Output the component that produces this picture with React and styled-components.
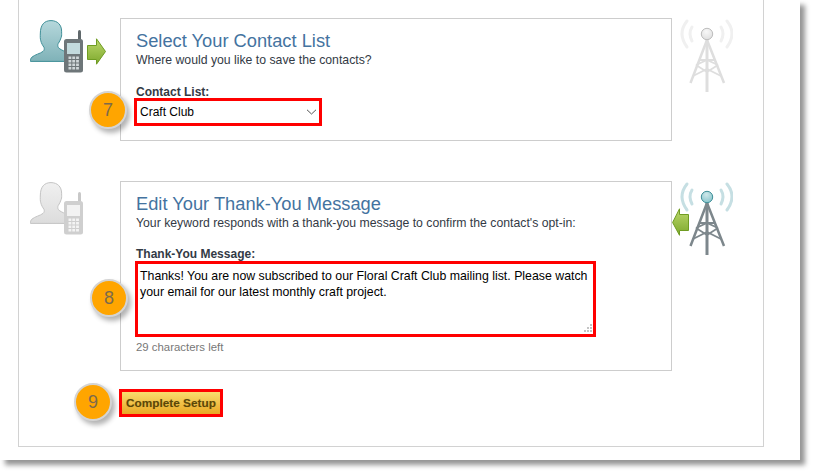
import React from "react";
import styled, { createGlobalStyle } from "styled-components";

const Global = createGlobalStyle`
  html, body { margin: 0; padding: 0; background: #fff; }
  body { font-family: "Liberation Sans", Arial, sans-serif; overflow: hidden; min-height: 475px; }
`;
const Shot = styled.div`
  width: 800px; height: 460px; background: #fff; overflow: hidden;
  box-shadow: 5px 5px 5px rgba(0,0,0,.42);
`;
const Panel = styled.main`
  margin-left: 18px; width: 746px; height: 447px; box-sizing: border-box;
  border: 1px solid #d2d2d2; border-top: none; padding-top: 18px;
`;
const Section = styled.section`
  display: flex; align-items: flex-start; margin-bottom: ${p => p.$gap}px;
`;
const IconCol = styled.div`
  width: 101px; flex: none; box-sizing: border-box; padding: ${p => p.$top}px 0 0 11px; display: flex;
`;
const Box = styled.div`
  position: relative; width: 552px; height: ${p => p.$h}px; box-sizing: border-box;
  border: 1px solid #cdcdcd; padding: ${p => p.$pad}px 15px 0; flex: none;
`;
const Title = styled.h2`
  margin: 0; font-size: 18.3px; line-height: 20px; font-weight: 400; color: #44739f;
`;
const Sub = styled.p`
  margin: 1px 0 0; font-size: 12.25px; line-height: 16px; color: #333a45;
`;
const Label = styled.label`
  display: block; font-size: 12px; line-height: 14px; font-weight: 700; color: #333a45;
  margin-top: ${p => p.$mt}px;
`;
const SelectWrap = styled.div`
  position: relative; width: 188px; height: 28px; margin: ${p => p.$mt}px 0 0 -2px;
`;
const Select = styled.select`
  appearance: none; width: 100%; height: 100%; box-sizing: border-box; border: 3px solid #f00;
  border-radius: 0; background: #fff; font: 12px "Liberation Sans", Arial, sans-serif; color: #000;
  padding: 0 0 0 3px; outline: none;
`;
const Chevron = styled.svg`
  position: absolute; right: 5px; top: 11px; width: 11px; height: 6px; pointer-events: none;
`;
const TextArea = styled.textarea`
  display: block; width: 461px; height: 76px; box-sizing: border-box; margin: 0 0 0 -1px;
  border: 3px solid #f00; border-radius: 0; padding: 4px 2px 3px; outline: none; resize: none;
  font: 12.33px/16px "Liberation Sans", Arial, sans-serif; color: #000; background: #fff; overflow: hidden;
`;
const AreaWrap = styled.div`
  position: relative; width: 461px;
`;
const Grip = styled.svg`
  position: absolute; right: 5px; bottom: 5px; width: 8px; height: 8px;
`;
const Hint = styled.div`
  font-size: 11.4px; line-height: 13px; color: #777; margin-top: 4px;
`;
const TowerCol = styled.div`
  flex: none; display: flex; padding-top: ${p => p.$top}px;
`;
const Badge = styled.div`
  position: absolute; left: ${p => p.$x}px; top: ${p => p.$y}px; width: 38px; height: 38px; box-sizing: border-box;
  border-radius: 50%; background: #ffa500; border: 2px solid #d4d4d4;
  box-shadow: 3px 4px 5px rgba(0,0,0,.3); color: #7c6a4c; font-size: 18px;
  display: flex; align-items: center; justify-content: center; z-index: 2;
`;
const Actions = styled.div`
  position: relative; margin-left: 100px; width: 104px; height: 28px;
`;
const Button = styled.button`
  width: 100%; height: 100%; box-sizing: border-box; border: 3px solid #f00; border-radius: 0; padding: 0;
  background: linear-gradient(#f9dc6e, #e9a824); color: #5b4708;
  font: 700 11.8px "Liberation Sans", Arial, sans-serif;
  text-shadow: 0 0 1px rgba(90,70,0,.25);
`;

const Person = ({ gray }) => {
  const id = gray ? "pg" : "pc";
  const c = gray
    ? { a: "#f0f0f0", b: "#dcdcdc", line: "#c4c4c4", ph: "#cfcfcf", sc: "#f2f2f2", key: "#f4f4f4", ant: "#c8c8c8" }
    : { a: "#b6d8dc", b: "#7fb2b8", line: "#3f8f98", ph: "#6e7679", sc: "#c3dadd", key: "#cfd6d8", ant: "#60686b" };
  return (
    <svg width="54" height="53" viewBox="0 0 54 53">
      <defs>
        <linearGradient id={id} x1="0" y1="0" x2="0" y2="1">
          <stop offset="0" stopColor={c.a} />
          <stop offset="1" stopColor={c.b} />
        </linearGradient>
      </defs>
      <path
        d="M21 .6c6.500 0 10.600 4.300 10.600 10.600 0 3 .3 4.300-.4 6.200-.8 2.400-1.800 4.600-3 6.200-.6 1-.5 3 .2 4 1.600 1.800 4.600 3 7 4v9.800H.5c0-1.600 0-3 1.500-4.300 2.800-2.500 8.400-3.500 11-5.700 1.300-1 1.500-2.700 1-4-1.300-2-2.700-4.200-3.200-6.600-.7-2-.5-4.400-.5-6.800C10.300 4.500 14.500.6 21 .6z"
        fill={`url(#${id})`} stroke={c.line} strokeWidth="1"
      />
      <rect x="48" y="10" width="3" height="11" rx="1.500" fill={c.ant} />
      <rect x="34" y="19" width="19" height="33.500" rx="2.500" fill={c.ph} />
      <rect x="37" y="23" width="13" height="11" fill={c.sc} />
      <g fill={c.key}>
        {[0, 1, 2, 3].flatMap(r =>
          [0, 1, 2].map(k => <rect key={`${r}${k}`} x={38.5 + k * 3.8} y={36.5 + r * 3.5} width="2.8" height="2.5" />)
        )}
      </g>
    </svg>
  );
};

const ArrowRight = () => (
  <svg width="19" height="27" viewBox="0 0 19 27" style={{ marginLeft: 3, marginTop: 18 }}>
    <defs>
      <linearGradient id="ar" x1="0" y1="0" x2="0" y2="1">
        <stop offset="0" stopColor="#bcd86c" />
        <stop offset="1" stopColor="#7da82c" />
      </linearGradient>
    </defs>
    <path d="M.5 7.500H9.500V.8L18.500 13.500L9.500 26.200V21.500H.5z" fill="url(#ar)" stroke="#6f9c22" />
  </svg>
);

const Tower = ({ active }) => {
  const c = active
    ? { arc: "#c6dfe3", leg: "#7d878c", ball: "#7fc0c8", ballLine: "#3f8f98", hi: "#cfe8ea" }
    : { arc: "#f0f0f0", leg: "#dedede", ball: "#dcdcdc", ballLine: "#bdbdbd", hi: "#f8f8f8" };
  const id = active ? "ta" : "ti";
  return (
    <svg width="61" height="76" viewBox="0 0 61 76">
      <defs>
        <radialGradient id={id} cx=".45" cy=".3" r=".8">
          <stop offset="0" stopColor={c.hi} />
          <stop offset="1" stopColor={c.ball} />
        </radialGradient>
        <linearGradient id="al" x1="0" y1="0" x2="0" y2="1">
          <stop offset="0" stopColor="#bcd86c" />
          <stop offset="1" stopColor="#7da82c" />
        </linearGradient>
      </defs>
      <g fill="none" stroke={c.arc} strokeLinecap="round">
        <path d="M15 3C8.500 11 8.500 20 15 29" strokeWidth="3" />
        <path d="M20 9C17.500 13 17.500 18 20 23" strokeWidth="3" />
        <path d="M55 3C61.500 11 61.500 20 55 29" strokeWidth="3" />
        <path d="M49 9C51.500 13 51.500 18 49 23" strokeWidth="3" />
      </g>
      <g fill="none" stroke={c.leg}>
        <path d="M35 22L18.500 65M35 22L52 65" strokeWidth="2.500" />
        <path d="M35 22V74" strokeWidth="3" />
        <path d="M27 42L43 42M24 47L35 54L46 47M24 47L35 42L46 47M21 58L35 51L49 58" strokeWidth="1.800" />
      </g>
      <circle cx="35" cy="16" r="5.700" fill={`url(#${id})`} stroke={c.ballLine} strokeWidth="1" />
      {active && (
        <path d="M16.500 33.500H7.500V27.800L.6 41.500L7.500 54.300V49.500H16.500z" fill="url(#al)" stroke="#6f9c22" />
      )}
    </svg>
  );
};

export default function App() {
  return (
    <>
      <Global />
      <Shot>
        <Panel>
          <Section $gap={40}>
            <IconCol $top={2}>
              <Person />
              <ArrowRight />
            </IconCol>
            <Box $h={123} $pad={12}>
              <Title>Select Your Contact List</Title>
              <Sub>Where would you like to save the contacts?</Sub>
              <Label htmlFor="list" $mt={17}>Contact List:</Label>
              <SelectWrap $mt={-1}>
                <Select id="list" defaultValue="Craft Club">
                  <option>Craft Club</option>
                </Select>
                <Chevron viewBox="0 0 11 6">
                  <path d="M1 .8L5.500 5L10 .8" fill="none" stroke="#555" strokeWidth="1" />
                </Chevron>
              </SelectWrap>
              <Badge $x={-32} $y={72}>7</Badge>
            </Box>
            <TowerCol $top={0}><Tower /></TowerCol>
          </Section>
          <Section $gap={18}>
            <IconCol $top={1}>
              <Person gray />
            </IconCol>
            <Box $h={190} $pad={12}>
              <Title>Edit Your Thank-You Message</Title>
              <Sub>Your keyword responds with a thank-you message to confirm the contact's opt-in:</Sub>
              <Label htmlFor="msg" $mt={16}>Thank-You Message:</Label>
              <AreaWrap>
                <TextArea
                  id="msg"
                  readOnly
                  defaultValue="Thanks! You are now subscribed to our Floral Craft Club mailing list. Please watch your email for our latest monthly craft project."
                />
                <Grip viewBox="0 0 8 8">
                  <g fill="#c4c4c4">
                    <rect x="6" y="0" width="2" height="2" />
                    <rect x="3" y="3" width="2" height="2" />
                    <rect x="6" y="3" width="2" height="2" />
                    <rect x="0" y="6" width="2" height="2" />
                    <rect x="3" y="6" width="2" height="2" />
                    <rect x="6" y="6" width="2" height="2" />
                  </g>
                </Grip>
              </AreaWrap>
              <Hint>29 characters left</Hint>
              <Badge $x={-31} $y={97}>8</Badge>
            </Box>
            <TowerCol $top={0}><Tower active /></TowerCol>
          </Section>
          <Actions>
            <Button>Complete Setup</Button>
            <Badge $x={-45} $y={-6}>9</Badge>
          </Actions>
        </Panel>
      </Shot>
    </>
  );
}
